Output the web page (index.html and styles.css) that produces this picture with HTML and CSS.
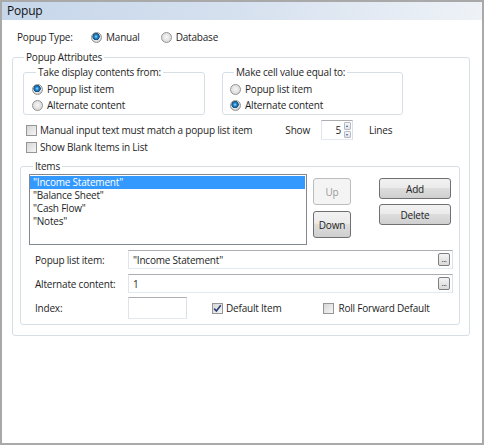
FILE: index.html
```html
<!DOCTYPE html>
<html lang="en">
<head>
  <meta charset="UTF-8">
  <title>Popup</title>
  <link rel="stylesheet" href="styles.css">
</head>
<body>
  <div class="window">
    <div class="titlebar">Popup</div>
    <div class="panel">
      <div class="type-row">
        <span class="type-label">Popup Type:</span>
        <label class="opt"><input type="radio" name="ptype" checked>Manual</label>
        <label class="opt db"><input type="radio" name="ptype">Database</label>
      </div>

      <fieldset class="group attrs">
        <legend>Popup Attributes</legend>
        <div class="sources">
          <fieldset class="group sub">
            <legend>Take display contents from:</legend>
            <label class="opt"><input type="radio" name="display" checked>Popup list item</label>
            <label class="opt"><input type="radio" name="display">Alternate content</label>
          </fieldset>
          <fieldset class="group sub">
            <legend>Make cell value equal to:</legend>
            <label class="opt"><input type="radio" name="cellvalue">Popup list item</label>
            <label class="opt"><input type="radio" name="cellvalue" checked>Alternate content</label>
          </fieldset>
        </div>

        <div class="check-row first">
          <label class="opt"><span class="cb"></span>Manual input text must match a popup list item</label>
          <span class="show">Show</span>
          <span class="spin">
            <span class="spin-value">5</span>
            <span class="spin-arrows">
              <span class="arrow up"></span>
              <span class="arrow down"></span>
            </span>
          </span>
          <span class="lines">Lines</span>
        </div>
        <div class="check-row">
          <label class="opt"><span class="cb"></span>Show Blank Items in List</label>
        </div>

        <fieldset class="group items">
          <legend>Items</legend>
          <div class="items-top">
            <ul class="listbox">
              <li class="selected">"Income Statement"</li>
              <li>"Balance Sheet"</li>
              <li>"Cash Flow"</li>
              <li>"Notes"</li>
            </ul>
            <div class="move-btns">
              <button class="btn tall" disabled>Up</button>
              <button class="btn tall">Down</button>
            </div>
            <div class="edit-btns">
              <button class="btn">Add</button>
              <button class="btn">Delete</button>
            </div>
          </div>

          <div class="field-row">
            <span class="field-label">Popup list item:</span>
            <div class="textbox wide">
              <span class="tb-value">"Income Statement"</span>
              <span class="ellipsis">...</span>
            </div>
          </div>
          <div class="field-row">
            <span class="field-label">Alternate content:</span>
            <div class="textbox wide">
              <span class="tb-value">1</span>
              <span class="ellipsis">...</span>
            </div>
          </div>
          <div class="field-row index-row">
            <span class="field-label">Index:</span>
            <div class="textbox short"></div>
            <label class="opt default-item">
              <span class="cb">
                <svg width="9" height="9" viewBox="0 0 9 9"><path d="M1.2 4.6 L3.4 7 L7.8 1.3" fill="none" stroke="#2a3f7a" stroke-width="1.6"/></svg>
              </span>Default Item
            </label>
            <label class="opt roll"><span class="cb"></span>Roll Forward Default</label>
          </div>
        </fieldset>
      </fieldset>
    </div>
  </div>
</body>
</html>
```

FILE: styles.css
```css
* {
  margin: 0;
  padding: 0;
  box-sizing: border-box;
  font-family: "Open Sans", "Noto Sans", sans-serif;
}
body {
  background: #fff;
  color: #1e1e1e;
  font-size: 10px;
  letter-spacing: -0.2px;
}
.window {
  width: 484px;
  height: 445px;
  border: 2px solid #a9a9a9;
  background: #fff;
}
.titlebar {
  height: 18px;
  padding-left: 5px;
  font-size: 12px;
  line-height: 18px;
  letter-spacing: -0.2px;
  color: #111;
  background: linear-gradient(to right, #c6d6ea, #d6e1ef 50%, #eef2f7);
}
.panel {
  padding: 10px 0 0 10px;
}

/* radios and checkboxes */
.opt {
  display: inline-flex;
  align-items: center;
  gap: 4px;
  height: 16px;
}
input[type="radio"] {
  appearance: none;
  width: 11px;
  height: 11px;
  border-radius: 50%;
  border: 1px solid #939393;
  background: radial-gradient(circle at 50% 45%, #f6f6f6, #d0d0d0);
  flex: none;
}
input[type="radio"]:checked {
  background: radial-gradient(circle at 45% 40%, #a8e2ff 0, #2f8fd2 1.4px, #0d4e7f 3.4px, #e6e6e6 3.9px, #cdcdcd 5.5px);
}
.cb {
  width: 11px;
  height: 11px;
  border: 1px solid #959595;
  background: linear-gradient(135deg, #d6d6d6, #f6f6f6);
  display: inline-flex;
  align-items: center;
  justify-content: center;
  flex: none;
}

.type-row {
  display: flex;
  align-items: center;
  height: 14px;
  margin-left: 5px;
}
.type-label {
  width: 74px;
}
.type-row .db {
  margin-left: 21px;
}

/* group boxes */
.group {
  border: 1px solid #d5dfe5;
  border-radius: 3px;
  min-width: 0;
}
.group legend {
  padding: 0 2px;
  margin-left: 4px;
  line-height: 14px;
}
.attrs {
  width: 458px;
  height: 286px;
  margin-top: 6px;
  padding: 1px 9px 0 7px;
}
.sources {
  display: flex;
  gap: 17px;
  margin-left: 3px;
}
.sub {
  padding: 2px 0 1px 8px;
  display: flex;
  flex-direction: column;
}
.sub:first-child {
  width: 182px;
}
.sub:last-child {
  width: 181px;
  padding-left: 7px;
}

.check-row {
  display: flex;
  align-items: center;
  height: 14px;
  margin-left: 6px;
}
.check-row.first {
  height: 20px;
  margin-top: 5px;
}
.check-row .opt {
  gap: 3px;
}
.show {
  margin-left: 33px;
}
.spin {
  display: inline-flex;
  width: 32px;
  height: 20px;
  margin-left: 11px;
  border: 1px solid;
  border-color: #abadb3 #dbdfe6 #e3e9ef #e2e3ea;
  padding: 1px;
}
.spin-value {
  flex: 1;
  text-align: right;
  padding-right: 3px;
  line-height: 16px;
}
.spin-arrows {
  width: 7px;
  display: flex;
  flex-direction: column;
  gap: 1px;
}
.arrow {
  flex: 1;
  border: 1px solid #b6bac2;
  border-radius: 1px;
  background: linear-gradient(#f4f6fa, #dde3ec);
  position: relative;
}
.arrow::after {
  content: "";
  position: absolute;
  left: 1px;
  border-left: 1.5px solid transparent;
  border-right: 1.5px solid transparent;
}
.arrow.up::after {
  top: 2px;
  border-bottom: 2px solid #3c5a8a;
}
.arrow.down::after {
  top: 2px;
  border-top: 2px solid #3c5a8a;
}
.lines {
  margin-left: 16px;
}

/* items */
.items {
  width: 440px;
  margin-top: 5px;
  padding: 1px 0 5px 8px;
}
.items-top {
  display: flex;
  align-items: flex-start;
}
.listbox {
  list-style: none;
  width: 278px;
  height: 71px;
  border: 1px solid #828790;
  padding: 1px 1px 0 0;
}
.listbox li {
  height: 13px;
  line-height: 13px;
  padding-left: 3px;
}
.listbox li.selected {
  background: #3399ff;
  color: #fff;
}
.move-btns,
.edit-btns {
  display: flex;
  flex-direction: column;
  margin-top: 4px;
}
.move-btns {
  gap: 6px;
  margin-left: 6px;
}
.edit-btns {
  gap: 5px;
  margin-left: 28px;
}
.btn {
  font: inherit;
  letter-spacing: inherit;
  color: #1e1e1e;
  width: 72px;
  height: 21px;
  border: 1px solid #707070;
  border-radius: 3px;
  background: linear-gradient(#f2f2f2, #ebebeb 45%, #dddddd 50%, #cfcfcf);
}
.btn.tall {
  width: 38px;
  height: 27px;
}
.btn:disabled {
  border-color: #b9bdc0;
  background: #f4f4f4;
  color: #9a9a9a;
}

.field-row {
  display: flex;
  align-items: center;
  margin-top: 5px;
}
.items-top + .field-row {
  margin-top: 5px;
}
.field-row.index-row {
  margin-top: 4px;
}
.field-label {
  width: 93px;
  margin-left: 6px;
}
.textbox {
  display: flex;
  align-items: center;
  height: 19px;
  border: 1px solid;
  border-color: #abadb3 #dbdfe6 #e3e9ef #e2e3ea;
  padding: 0 2px 0 4px;
}
.textbox.wide {
  width: 325px;
}
.textbox.short {
  width: 59px;
  height: 22px;
}
.tb-value {
  flex: 1;
}
.ellipsis {
  width: 12px;
  height: 13px;
  border: 1px solid #7e7e7e;
  border-radius: 2px;
  background: linear-gradient(#f4f4f4, #d9d9d9);
  font-size: 8px;
  line-height: 9px;
  text-align: center;
  letter-spacing: -0.5px;
}
.default-item {
  margin-left: 25px;
  gap: 3px;
}
.roll {
  margin-left: 42px;
  gap: 4px;
}
```
